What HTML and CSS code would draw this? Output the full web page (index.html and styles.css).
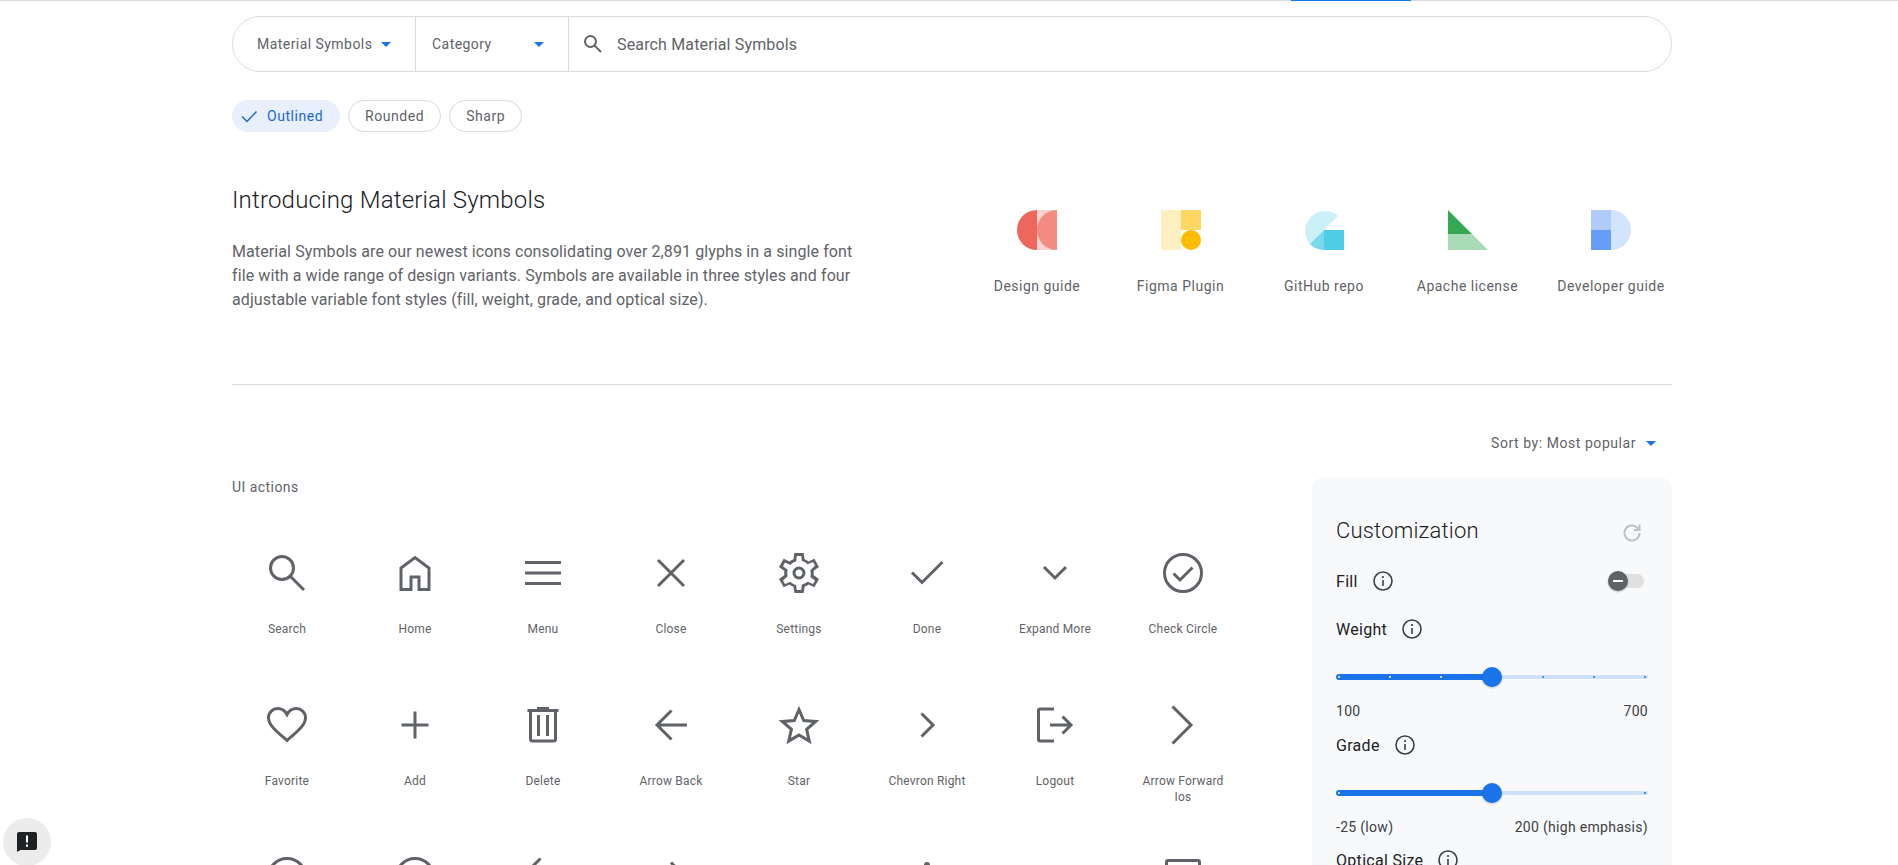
FILE: index.html
```html
<!DOCTYPE html>
<html>
<head>
	<meta http-equiv="Content-Type" content="text/html; charset=utf-8">
	<title>Material Symbols</title>
	<link rel="stylesheet" href="styles.css">
</head>
<body>

	<div class="topline"><div class="topline-tab"></div></div>

	<div class="page">

		<div class="searchbar">
			<div class="drop drop-family"><span>Material Symbols</span><i class="caret"></i></div>
			<div class="drop drop-category"><span>Category</span><i class="caret"></i></div>
			<div class="searchbox">
				<svg class="searchbox-icon" viewBox="0 0 24 24"><circle cx="9.5" cy="9.5" r="5.5"/><path d="M13.6 13.6 20 20"/></svg>
				<span>Search Material Symbols</span>
			</div>
		</div>

		<div class="chips">
			<div class="chip chip-on">
				<svg viewBox="0 0 18 18"><path d="M2 9.5 7 14.5 16.5 4.5"/></svg>
				Outlined
			</div>
			<div class="chip">Rounded</div>
			<div class="chip">Sharp</div>
		</div>

		<div class="intro">
			<div class="intro-text">
				<h1>Introducing Material Symbols</h1>
				<p>Material Symbols are our newest icons consolidating over 2,891 glyphs in a single font file with a wide range of design variants. Symbols are available in three styles and four adjustable variable font styles (fill, weight, grade, and optical size).</p>
			</div>
			<div class="links">
				<div class="link">
					<svg viewBox="0 0 40 40"><path d="M20 0A20 20 0 0 0 20 40Z" fill="#ee675c"/><rect x="20" width="20" height="40" fill="#fad2cf"/><path d="M40 0A20 20 0 0 0 40 40Z" fill="#f28b82"/></svg>
					<span>Design guide</span>
				</div>
				<div class="link">
					<svg viewBox="0 0 40 40"><rect width="20" height="40" fill="#feefc3"/><rect x="20" width="20" height="20" fill="#fdd663"/><circle cx="30" cy="30" r="10" fill="#fbbc04"/></svg>
					<span>Figma Plugin</span>
				</div>
				<div class="link">
					<svg viewBox="0 0 40 40"><path d="M34.1 5.9A20 20 0 0 0 5.9 34.1L20 20Z" fill="#cbf0f8"/><path d="M5.9 34.1A20 20 0 0 0 20 40V20Z" fill="#78d9ec"/><rect x="20" y="20" width="20" height="20" fill="#4ecde6"/></svg>
					<span>GitHub repo</span>
				</div>
				<div class="link">
					<svg viewBox="0 0 40 40"><path d="M0 0 24 24H0Z" fill="#34a853"/><path d="M0 24H24L40 40H0Z" fill="#a8dab5"/></svg>
					<span>Apache license</span>
				</div>
				<div class="link">
					<svg viewBox="0 0 40 40"><path d="M20 0A20 20 0 0 1 20 40Z" fill="#d2e3fc"/><rect width="20" height="20" fill="#aecbfa"/><rect y="20" width="20" height="20" fill="#669df6"/></svg>
					<span>Developer guide</span>
				</div>
			</div>
		</div>

		<div class="sort"><span>Sort by: Most popular</span><i class="caret"></i></div>

		<div class="main">

			<div class="icons">
				<div class="icons-title">UI actions</div>
				<div class="grid">
					<div class="item">
						<svg class="ico" viewBox="0 0 48 48"><circle cx="19" cy="19" r="11.5"/><path d="M27.3 27.3 41 41"/></svg>
						<span>Search</span>
					</div>
					<div class="item">
						<svg class="ico" viewBox="0 0 48 48"><path d="M10 40.5V19L24 8.5 38 19v21.5H28V28h-8v12.5Z"/></svg>
						<span>Home</span>
					</div>
					<div class="item">
						<svg class="ico" viewBox="0 0 48 48"><path d="M6 13.5h36M6 24h36M6 34.5h36"/></svg>
						<span>Menu</span>
					</div>
					<div class="item">
						<svg class="ico" viewBox="0 0 48 48"><path d="M11 11 37 37M37 11 11 37"/></svg>
						<span>Close</span>
					</div>
					<div class="item">
						<svg class="ico ico-fill" viewBox="0 0 48 48"><path fill-rule="evenodd" d="M19.4 44l-1-6.3q-.95-.35-2-.95t-1.85-1.25l-5.9 2.7L4 30l5.4-3.95q-.1-.45-.125-1.025Q9.25 24.45 9.25 24q0-.45.025-1.025T9.4 21.95L4 18l4.65-8.2 5.9 2.7q.8-.65 1.85-1.25t2-.9l1-6.35h9.2l1 6.3q.95.35 2.025.925Q32.7 11.8 33.45 12.5l5.9-2.7L44 18l-5.4 3.85q.1.5.125 1.075.025.575.025 1.075t-.025 1.05q-.025.55-.125 1.05L44 30l-4.65 8.2-5.9-2.7q-.8.65-1.825 1.275-1.025.625-2.025.925l-1 6.3ZM21.8 41h4.4l.7-5.6q1.65-.4 3.125-1.25T32.7 32.7l5.3 2.3 2-3.6-4.7-3.45q.2-.85.325-1.675.125-.825.125-1.675 0-.85-.1-1.675-.1-.825-.35-1.675L40 16.6 38 13l-5.3 2.3q-1.15-1.3-2.6-2.175-1.45-.875-3.2-1.125L26.2 7h-4.4l-.7 5.6q-1.7.35-3.175 1.2-1.475.85-2.625 2.1L10 13.6 8 17.2l4.7 3.45q-.2.85-.325 1.675-.125.825-.125 1.675 0 .85.125 1.675.125.825.325 1.675L8 31.4l2 3.6 5.3-2.3q1.2 1.2 2.675 2.05Q19.45 35.6 21.1 36ZM24 30.5q2.7 0 4.6-1.9 1.9-1.9 1.9-4.6 0-2.7-1.9-4.6-1.9-1.9-4.6-1.9-2.7 0-4.6 1.9-1.9 1.9-1.9 4.6 0 2.7 1.9 4.6 1.9 1.9 4.6 1.9ZM24 27.5q-1.45 0-2.475-1.025Q20.5 25.45 20.5 24q0-1.45 1.025-2.475Q22.55 20.5 24 20.5q1.45 0 2.475 1.025Q27.5 22.55 27.5 24q0 1.45-1.025 2.475Q25.45 27.5 24 27.5Z"/></svg>
						<span>Settings</span>
					</div>
					<div class="item">
						<svg class="ico" viewBox="0 0 48 48"><path d="M9 23.5 19 33.5 39.5 13"/></svg>
						<span>Done</span>
					</div>
					<div class="item">
						<svg class="ico" viewBox="0 0 48 48"><path d="M13 18 24 29 35 18"/></svg>
						<span>Expand More</span>
					</div>
					<div class="item">
						<svg class="ico" viewBox="0 0 48 48"><circle cx="24" cy="24" r="18.5"/><path d="M14.5 24.5 21 31 33.5 18.5"/></svg>
						<span>Check Circle</span>
					</div>

					<div class="item">
						<svg class="ico" viewBox="0 0 48 48"><path d="M24 39.5l-2-1.8C14 30.5 5.500 24.5 5.500 16.5 5.500 11.5 10 7.500 14.5 7.500c3.500 0 7.500 2 9.500 6 2-4 6-6 9.500-6 4.500 0 9 4 9 9 0 8-8.500 14-16.500 21.200Z"/></svg>
						<span>Favorite</span>
					</div>
					<div class="item">
						<svg class="ico" viewBox="0 0 48 48"><path d="M10.5 24h27M24 10.5v27"/></svg>
						<span>Add</span>
					</div>
					<div class="item">
						<svg class="ico" viewBox="0 0 48 48"><path d="M8.5 9.500h31M18 7.500h12M11.500 9.500V38a2 2 0 0 0 2 2h21a2 2 0 0 0 2-2V9.500M19.500 14v21M28.500 14v21"/></svg>
						<span>Delete</span>
					</div>
					<div class="item">
						<svg class="ico" viewBox="0 0 48 48"><path d="M40 24H11M24.5 9.500 10 24 24.500 38.500"/></svg>
						<span>Arrow Back</span>
					</div>
					<div class="item">
						<svg class="ico" viewBox="0 0 48 48"><path d="M24 8.500l4.700 11 12 1-9.100 7.900 2.700 11.700L24 33.900l-10.300 6.200 2.700-11.700-9.100-7.900 12-1Z"/></svg>
						<span>Star</span>
					</div>
					<div class="item">
						<svg class="ico" viewBox="0 0 48 48"><path d="M18.5 12.500 30 24 18.500 35.500"/></svg>
						<span>Chevron Right</span>
					</div>
					<div class="item">
						<svg class="ico" viewBox="0 0 48 48"><path d="M23 8H9A1.500 1.500 0 0 0 7.500 9.500v29A1.500 1.500 0 0 0 9 40h14M19 24h20M31.500 15.500 40 24 31.500 32.500"/></svg>
						<span>Logout</span>
					</div>
					<div class="item">
						<svg class="ico" viewBox="0 0 48 48"><path d="M13.5 5.500 32 24 13.500 42.500"/></svg>
						<span>Arrow Forward Ios</span>
					</div>

					<div class="item">
						<svg class="ico" viewBox="0 0 48 48"><circle cx="24" cy="24" r="18.500"/><path d="M24 22v12M24 14v3"/></svg>
					</div>
					<div class="item">
						<svg class="ico" viewBox="0 0 48 48"><circle cx="24" cy="24" r="18.500"/><circle cx="24" cy="20" r="6"/><path d="M12 36c3-4 7-6 12-6s9 2 12 6"/></svg>
					</div>
					<div class="item">
						<svg class="ico" viewBox="0 0 48 48"><path d="M21.5 5.500 3 24 21.500 42.500"/></svg>
					</div>
					<div class="item">
						<svg class="ico" viewBox="0 0 48 48"><path d="M9 24h28.500M24 9.500 38.500 24 24 38.500"/></svg>
					</div>
					<div class="item">
						<svg class="ico" viewBox="0 0 48 48"><path d="M13 30 24 19 35 30"/></svg>
					</div>
					<div class="item">
						<svg class="ico ico-fill" viewBox="0 0 48 48"><circle cx="24" cy="12" r="3"/><circle cx="24" cy="24" r="3"/><circle cx="24" cy="36" r="3"/></svg>
					</div>
					<div class="item">
						<svg class="ico ico-fill" viewBox="0 0 48 48"><path d="M14 20h20L24 30Z"/></svg>
					</div>
					<div class="item">
						<svg class="ico" viewBox="0 0 48 48"><rect x="7.500" y="7.500" width="33" height="33" rx="1.500"/></svg>
					</div>
				</div>
			</div>

			<div class="panel">
				<div class="panel-head">
					<h2>Customization</h2>
					<svg class="reset" viewBox="0 0 24 24"><path d="M19.5 12a7.500 7.500 0 1 1-2.200-5.300L19.500 9M19.500 3.500V9H14"/></svg>
				</div>

				<div class="opt opt-fill">
					<div class="opt-name">Fill <svg class="info" viewBox="0 0 20 20"><circle cx="10" cy="10" r="9"/><path d="M10 9v6M10 5v2"/></svg></div>
					<div class="toggle"><div class="toggle-thumb"><i></i></div></div>
				</div>

				<div class="opt opt-weight">
					<div class="opt-name">Weight <svg class="info" viewBox="0 0 20 20"><circle cx="10" cy="10" r="9"/><path d="M10 9v6M10 5v2"/></svg></div>
				</div>
				<div class="slider">
					<div class="slider-on" style="width: 50%"></div>
					<div class="slider-off" style="width: 50%"></div>
					<div class="ticks"><i class="tick-w"></i><i class="tick-w"></i><i class="tick-w"></i><i class="tick-none"></i><i></i><i></i><i></i></div>
					<div class="thumb" style="left: 50%"></div>
				</div>
				<div class="range"><span>100</span><span>700</span></div>

				<div class="opt opt-grade">
					<div class="opt-name">Grade <svg class="info" viewBox="0 0 20 20"><circle cx="10" cy="10" r="9"/><path d="M10 9v6M10 5v2"/></svg></div>
				</div>
				<div class="slider">
					<div class="slider-on" style="width: 50%"></div>
					<div class="slider-off" style="width: 50%"></div>
					<div class="ticks"><i class="tick-w"></i><i></i></div>
					<div class="thumb" style="left: 50%"></div>
				</div>
				<div class="range"><span>-25 (low)</span><span>200 (high emphasis)</span></div>

				<div class="opt opt-size">
					<div class="opt-name">Optical Size <svg class="info" viewBox="0 0 20 20"><circle cx="10" cy="10" r="9"/><path d="M10 9v6M10 5v2"/></svg></div>
				</div>
			</div>

		</div>
	</div>

	<div class="feedback">
		<svg viewBox="0 0 20 20"><path d="M2 0h16a2 2 0 0 1 2 2v14a2 2 0 0 1-2 2H3.500L0 20V2a2 2 0 0 1 2-2Z"/><path class="feedback-mark" d="M9 3.500h2v7H9ZM9 12.500h2v2.200H9Z"/></svg>
	</div>

</body>
</html>
```

FILE: styles.css
```css
* {padding: 0; margin: 0; box-sizing: border-box;}
html, body {height: 100%; overflow: hidden;}
body {background: #fff; color: #5f6368; font-family: Roboto, "Liberation Sans", sans-serif; font-size: 14px;}

.topline {height: 1px; background: #dadce0;}
.topline-tab {width: 120px; height: 1px; margin-left: 1291px; background: #1a73e8;}

.page {width: 1440px; margin-left: 232px;}

.caret {display: block; width: 0; height: 0; border-left: 5px solid transparent; border-right: 5px solid transparent; border-top: 5px solid #1a73e8;}

/* search */
.searchbar {display: flex; height: 56px; margin-top: 15px; border: 1px solid #dadce0; border-radius: 28px;}
.drop {display: flex; align-items: center; justify-content: space-between; border-right: 1px solid #dadce0; padding-right: 24px; letter-spacing: .45px;}
.drop-family {width: 183px; padding-left: 24px;}
.drop-category {width: 153px; padding-left: 16px;}
.searchbox {display: flex; align-items: center; flex: 1; font-size: 16px; letter-spacing: .15px;}
.searchbox-icon {width: 24px; height: 24px; margin-left: 12px; margin-right: 12px; fill: none; stroke: #5f6368; stroke-width: 2;}

/* chips */
.chips {display: flex; gap: 8px; margin-top: 28px;}
.chip {display: flex; align-items: center; height: 32px; padding: 0 16px; border: 1px solid #dadce0; border-radius: 16px; letter-spacing: .55px;}
.chip-on {width: 108px; padding: 0 0 0 8px; gap: 9px; border: 0; background: #e8f0fe; color: #1967d2;}
.chip-on svg {width: 18px; height: 18px; fill: none; stroke: #1967d2; stroke-width: 1.5;}

/* intro */
.intro {display: flex; justify-content: space-between; height: 201px; margin-top: 52px; border-bottom: 1px solid #dadce0;}
.intro-text {width: 630px;}
.intro-text h1 {font-size: 24px; line-height: 32px; font-weight: 300; letter-spacing: .2px; color: #202124;}
.intro-text p {margin-top: 24px; font-size: 16px; line-height: 24px; letter-spacing: .1px;}
.links {display: flex; gap: 23.5px; padding-top: 26px; margin-right: 1px;}
.link {display: flex; flex-direction: column; align-items: center; width: 120px; line-height: 20px; letter-spacing: .5px;}
.link svg {width: 40px; height: 40px; margin-bottom: 26px;}

/* sort */
.sort {display: flex; align-items: center; justify-content: flex-end; gap: 10px; height: 24px; margin-top: 46px; padding-right: 16px; letter-spacing: .55px;}

.main {display: flex; justify-content: space-between; margin-top: 22px;}

/* icon grid */
.icons {width: 1006px;}
.icons-title {line-height: 20px; letter-spacing: .45px;}
.grid {display: grid; grid-template-columns: repeat(8, 110px); grid-auto-rows: 104px; column-gap: 18px; row-gap: 48px; margin-top: 52px;}
.item {display: flex; flex-direction: column; align-items: center; text-align: center; font-size: 12px; line-height: 16px; letter-spacing: .2px;}
.item svg {flex: none; margin-bottom: 24px;}
.item span {max-width: 96px;}
.ico {width: 48px; height: 48px; fill: none; stroke: #5f6368; stroke-width: 3;}
.ico-fill {fill: #5f6368; stroke: none;}

/* customization */
.panel {width: 360px; height: 500px; padding: 38px 24px 0; border-radius: 12px; background: #f8f9fa; color: #3c4043;}
.panel-head {display: flex; align-items: center; justify-content: space-between; height: 32px;}
.panel-head h2 {font-size: 22px; line-height: 32px; font-weight: 300; letter-spacing: .2px; color: #202124;}
.reset {width: 24px; height: 24px; margin-top: 4px; margin-right: 4px; fill: none; stroke: #bdc1c6; stroke-width: 2;}
.opt {display: flex; align-items: center; justify-content: space-between; height: 24px;}
.opt-fill {margin-top: 22px;}
.opt-weight {margin-top: 24px;}
.opt-grade {margin-top: 12px;}
.opt-size {margin-top: 11px;}
.opt-name {display: flex; align-items: center; gap: 15px; font-size: 16px; letter-spacing: .3px; color: #202124;}
.info {width: 20px; height: 20px; fill: none; stroke: #3c4043; stroke-width: 1.6;}
.toggle {display: flex; align-items: center; width: 36px; height: 14px; margin-right: 4px; border-radius: 7px; background: #e0e0e0;}
.toggle-thumb {display: flex; align-items: center; justify-content: center; flex: none; width: 20px; height: 20px; border-radius: 50%; background: #5f6368; box-shadow: 0 1px 2px rgba(60,64,67,.3);}
.toggle-thumb i {display: block; width: 10px; height: 2px; background: #fff;}

.slider {position: relative; display: flex; align-items: center; height: 20px; margin-top: 26px;}
.slider-on {height: 6px; border-radius: 3px 0 0 3px; background: #1a73e8;}
.slider-off {height: 4px; border-radius: 0 2px 2px 0; background: #cfe0fa;}
.ticks {position: absolute; left: 2px; right: 2px; top: 9px; display: flex; justify-content: space-between;}
.ticks i {display: block; width: 2px; height: 2px; border-radius: 50%; background: #1a73e8;}
.ticks .tick-w {background: #fff;}
.ticks .tick-none {background: transparent;}
.thumb {position: absolute; top: 0; width: 20px; height: 20px; margin-left: -10px; border-radius: 50%; background: #1a73e8; box-shadow: 0 1px 2px rgba(60,64,67,.3);}
.range {display: flex; justify-content: space-between; margin-top: 14px; line-height: 20px; letter-spacing: .3px;}

/* feedback button */
.feedback {position: fixed; left: 3px; top: 818px; display: flex; align-items: center; justify-content: center; width: 48px; height: 48px; border-radius: 50%; background: #ececec;}
.feedback svg {width: 20px; height: 20px; fill: #202124;}
.feedback .feedback-mark {fill: #fff;}
```
